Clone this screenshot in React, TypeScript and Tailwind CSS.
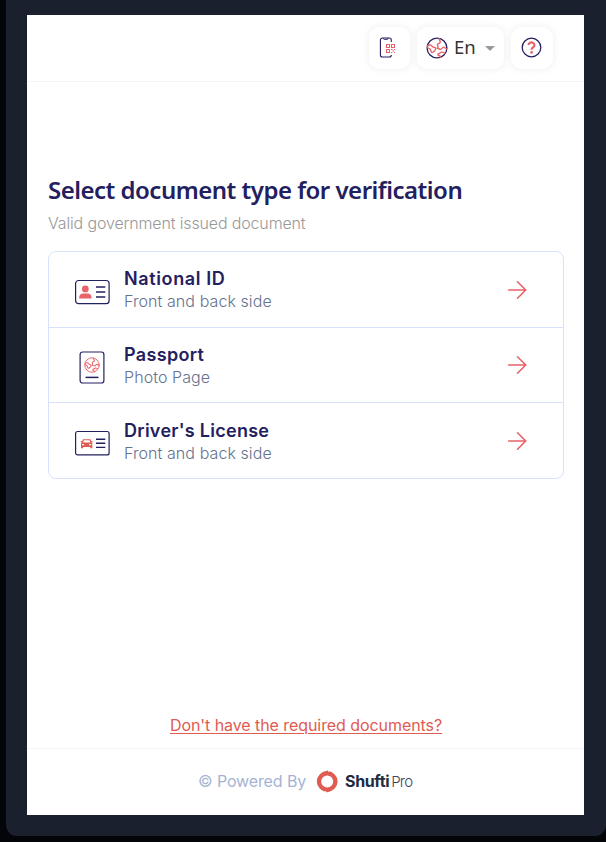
import type { ReactNode } from 'react';

const NAVY = '#23205f';
const RED = '#e8636a';

function Globe({ ring, land, className }: { ring: string; land: string; className: string }) {
  return (
    <svg viewBox="0 0 22 22" fill="none" className={className} strokeLinecap="round" strokeLinejoin="round">
      <circle cx="11" cy="11" r="9.900" stroke={ring} strokeWidth="1.300" />
      <g stroke={land} strokeWidth="1.400">
        <path d="M1.400 9C3 7.600 5.200 7.800 6.200 9.300c.9 1.400 2.600.6 3.500 1.900.7 1.200-.5 2-1.500 3-1 1-1.400 1.700-2.500 1.100-1.300-.8-.5-2.200-1.700-3.300L1.400 10.500" />
        <path d="M13 1.500c-.4 1.500 1.800 2 1.200 3.700-.5 1.400-2.400 1-2.800 2.500-.3 1.300 1.200 1.500.4 2.900" />
        <path d="M20.500 11.800c-1.500-.2-1.500-1.800-3-1.700-1.600.1-1.200 2-2.700 2.300-1.400.3-2-1.400-3.500-1.200" />
        <path d="M18.800 16.200c-1-.1-1.500-1.300-3-1.100-1.300.2-1.400 1.300-2.700 1.400-1.500.2-1.500 2 .2 2.300 1.200.2 1 .8 1.200 1.500" />
      </g>
    </svg>
  );
}

function PhoneQr() {
  return (
    <svg viewBox="0 0 18 22" fill="none" className="h-[22px] w-[18px]">
      <path d="M12.300 5V3a2 2 0 0 0-2-2H3.400a2 2 0 0 0-2 2v15a2 2 0 0 0 2 2h6.900a2 2 0 0 0 2-2" stroke={NAVY} strokeWidth="1.100" />
      <path d="M4.500 1v.5q0 .8.800.8h3q.8 0 .8-.8V1" stroke={NAVY} />
      <g stroke={RED} strokeWidth="1.100">
        <path d="M7.500 7.500h3v3h-3zM12.500 7.500h3v3h-3zM7.500 12.500h3v3h-3z" />
        <path d="M12 12.500h1.500M15 12.500h1.200M13.500 14h1.500M12 15.500h1.200M15 15.500h1.200" strokeWidth="1" />
      </g>
    </svg>
  );
}

function Help() {
  return (
    <svg viewBox="0 0 22 22" fill="none" className="size-[22px]">
      <circle cx="10.500" cy="10.500" r="9.300" stroke={NAVY} strokeWidth="1.300" />
      <path d="M7.600 8.100a2.900 2.700 0 1 1 4.700 2.100c-1.100.8-1.700 1-1.700 2.600" stroke={RED} strokeWidth="2.200" />
      <circle cx="10.600" cy="15.400" r="1.400" fill={RED} />
    </svg>
  );
}

function NationalIdIcon() {
  return (
    <svg viewBox="0 0 36 26" fill="none" className="h-[26px] w-9">
      <rect x="1.600" y="1.500" width="33.500" height="23.200" rx="3" stroke={NAVY} strokeWidth="1.200" />
      <circle cx="11.300" cy="9.900" r="3.400" fill={RED} />
      <path d="M5.200 19.600v-1.200c0-2.400 1.700-3.900 3.800-3.900h4.700c2.100 0 3.800 1.500 3.800 3.900v1.200z" fill={RED} />
      <path d="M22 8h9.300M22 13h9.300M22 18h9.300" stroke={NAVY} strokeWidth="1.600" />
    </svg>
  );
}

function PassportIcon() {
  return (
    <div className="relative h-[33px] w-[26px]">
      <svg viewBox="0 0 26 33" fill="none" className="h-[33px] w-[26px]">
        <rect x="1.100" y="1" width="23.800" height="31" rx="2.500" stroke={NAVY} strokeWidth="1.200" />
        <path d="M6.500 26.400h13" stroke={NAVY} strokeWidth="1.500" />
      </svg>
      <Globe ring={RED} land={RED} className="absolute left-[5px] top-[6px] size-4" />
    </div>
  );
}

function LicenseIcon() {
  return (
    <svg viewBox="0 0 36 26" fill="none" className="h-[26px] w-9">
      <rect x="1.600" y="1.500" width="33.500" height="23.400" rx="2" stroke={NAVY} strokeWidth="1.200" />
      <path fillRule="evenodd" fill="#e05b52" d="M9 9.200h7.400l1.200 3 .7.700v5.300h-2v-1.300H9v1.300H7v-5.300l.7-.7zM9.900 10.300l-.7 2.100h7l-.7-2.100zM8.100 14v1.200h2V14zm7.100 0v1.200h2V14zM6.800 11h1.400v1.100H6.800zm10.300 0h1.400v1.100h-1.400z" />
      <path d="M22 9.200h9.300M22 13.300h9.300M22 17.400h9.300" stroke={NAVY} strokeWidth="1.400" />
    </svg>
  );
}

function Arrow() {
  return (
    <svg viewBox="0 0 20 20" fill="none" stroke={RED} strokeWidth="1.600" className="mr-[36px] size-5" strokeLinecap="round">
      <path d="M1.700 10h17M10.500 1.800l8.200 8.200-8.200 8.200" />
    </svg>
  );
}

function HeaderButton({ className, children }: { className: string; children: ReactNode }) {
  return (
    <button className={`flex h-[42px] items-center rounded-[10px] bg-white shadow-[0_0_9px_rgba(0,0,0,0.07)] ${className}`}>
      {children}
    </button>
  );
}

function DocumentRow({ icon, title, titleClass, detail, textClass, height }: {
  icon: ReactNode; title: string; titleClass: string; detail: string; textClass: string; height: string;
}) {
  return (
    <button className={`flex w-full items-center border-b border-[#d8e2fa] text-left last:border-b-0 ${height}`}>
      <div className="ml-[25px] mt-[5px] flex w-9 justify-center">{icon}</div>
      <div className={`ml-[14px] flex-1 whitespace-nowrap ${textClass}`}>
        <div className={`text-[18px] font-semibold leading-[23px] text-[#23205f] ${titleClass}`}>{title}</div>
        <div className="text-[16px] font-light leading-[22px] tracking-[0.08px] text-[#66728f]">{detail}</div>
      </div>
      <Arrow />
    </button>
  );
}

export default function App() {
  return (
    <div className="h-[842px] w-[606px] overflow-hidden bg-[#030509] pl-[6px] font-['Inter',sans-serif]">
      <div className="h-[836px] w-[600px] rounded-b-[11px] bg-[#1a202e] pl-[21px] pt-[15px]">
        <main className="flex h-[800px] w-[557px] flex-col bg-white">
          <header className="flex h-[67px] items-start justify-end gap-[7px] border-b border-[#f4f4f6] pr-[31px] pt-[12px]">
            <HeaderButton className="w-[41px] pb-px pl-[10px]"><PhoneQr /></HeaderButton>
            <HeaderButton className="w-[87px] pl-[9px]">
              <Globe ring={NAVY} land={RED} className="size-[22px]" />
              <span className="ml-[6px] pb-[2px] font-['Noto_Sans',sans-serif] text-[18.500px] leading-6 text-[#333]">En</span>
              <span className="ml-[9px] border-x-[5px] border-t-[5px] border-x-transparent border-t-[#999]" />
            </HeaderButton>
            <HeaderButton className="w-[42px] pl-[10px]"><Help /></HeaderButton>
          </header>

          <section className="px-[21px] pt-[91px]">
            <h1 className="whitespace-nowrap font-['Noto_Sans',sans-serif] text-[24px] font-semibold leading-[34px] tracking-[-0.51px] text-[#23205f]">
              Select document type for verification
            </h1>
            <p className="mt-[4px] whitespace-nowrap text-[16px] font-light leading-6 tracking-[-0.15px] text-[#999]">
              Valid government issued document
            </p>
            <div className="mt-[16px] h-[228px] w-[516px] rounded-lg border border-[#d8e2fa]">
              <DocumentRow icon={<NationalIdIcon />} title="National ID" titleClass="tracking-[0.62px]" detail="Front and back side" textClass="" height="h-[76px]" />
              <DocumentRow icon={<PassportIcon />} title="Passport" titleClass="tracking-[0.34px]" detail="Photo Page" textClass="" height="h-[75px]" />
              <DocumentRow icon={<LicenseIcon />} title="Driver's License" titleClass="tracking-[0.28px]" detail="Front and back side" textClass="pt-[2px]" height="h-[75px]" />
            </div>
          </section>

          <div className="mt-auto flex h-[35px] justify-center pl-px">
            <a className="whitespace-nowrap text-[16px] leading-6 tracking-[-0.07px] text-[#e05b52] underline decoration-1 underline-offset-2">
              Don't have the required documents?
            </a>
          </div>
          <footer className="flex h-[67px] items-center border-t border-[#f4f4f6] pb-[2px] pl-[171px]">
            <span className="w-[108px] whitespace-nowrap text-[16px] tracking-[-0.12px] text-[#a5b3d4]">© Powered By</span>
            <svg viewBox="0 0 24 24" fill="none" className="ml-[9px] size-6">
              <circle cx="12.200" cy="12.500" r="8.200" stroke="#e05b52" strokeWidth="4.400" />
              <path d="M9.500 2.800l3.700-1.600-.6 2.300zM15 22.200l-4 1.400 1-2.600z" fill="#e05b52" />
              <path d="M14.100 1.600l-.5 1.400M10.400 23.400l.5-1.400" stroke="white" strokeWidth=".7" />
            </svg>
            <div className="ml-[6px] flex items-baseline whitespace-nowrap">
              <span className="text-[16px] font-bold tracking-[-0.35px] text-[#202b42]">Shufti</span>
              <span className="ml-[2px] text-[15px] font-light tracking-[-0.8px] text-[#3c465c]">Pro</span>
            </div>
          </footer>
        </main>
      </div>
    </div>
  );
}
